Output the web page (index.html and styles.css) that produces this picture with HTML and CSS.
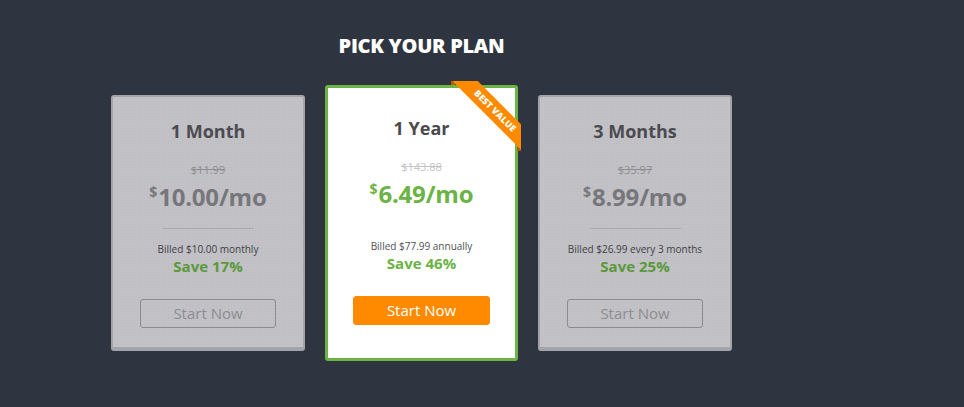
FILE: index.html
```html
<!DOCTYPE html>
<html lang="en">
<head>
<meta charset="utf-8">
<title>Pick your plan</title>
<link rel="stylesheet" href="styles.css">
</head>
<body>
<main class="page">
  <h1 class="title">PICK YOUR PLAN</h1>
  <div class="plans">
    <section class="plan">
      <h2 class="plan-name">1 Month</h2>
      <div class="old-price">$11.99</div>
      <div class="price"><span class="cur">$</span>10.00/mo</div>
      <hr class="divider">
      <div class="billed">Billed $10.00 monthly</div>
      <div class="save">Save 17%</div>
      <button class="btn">Start Now</button>
    </section>
    <section class="plan plan-featured">
      <div class="ribbon"><span class="ribbon-band">BEST VALUE</span></div>
      <h2 class="plan-name">1 Year</h2>
      <div class="old-price">$143.88</div>
      <div class="price"><span class="cur">$</span>6.49/mo</div>
      <hr class="divider">
      <div class="billed">Billed $77.99 annually</div>
      <div class="save">Save 46%</div>
      <button class="btn">Start Now</button>
    </section>
    <section class="plan">
      <h2 class="plan-name">3 Months</h2>
      <div class="old-price">$35.97</div>
      <div class="price"><span class="cur">$</span>8.99/mo</div>
      <hr class="divider">
      <div class="billed">Billed $26.99 every 3 months</div>
      <div class="save">Save 25%</div>
      <button class="btn">Start Now</button>
    </section>
  </div>
</main>
</body>
</html>
```
FILE: styles.css
```css
* { box-sizing: border-box; }
html, body { margin: 0; padding: 0; }
body {
  background: #2e3540;
  font-family: "Open Sans", "Liberation Sans", sans-serif;
  height: 407px;
  overflow: hidden;
}
.page {
  width: 843px;
  display: flex;
  flex-direction: column;
  align-items: center;
}
.title {
  margin: 32px 0 0;
  font-size: 20px;
  line-height: 27px;
  font-weight: 800;
  color: #ffffff;
  letter-spacing: -0.3px;
}
.plans {
  margin-top: 26px;
  display: flex;
  align-items: center;
  gap: 20px;
}
.plan {
  position: relative;
  width: 194px;
  display: flex;
  flex-direction: column;
  align-items: center;
  background-color: #c2c1c6;
  background-image: radial-gradient(rgba(0,0,0,0.03) 0.6px, transparent 0.8px);
  background-size: 3px 3px;
  border: 2px solid #a4a4a8;
  border-bottom-width: 4px;
  border-radius: 3px;
  padding: 22px 0 19px;
  text-align: center;
}
.plan-name {
  margin: 0;
  font-size: 18px;
  line-height: 24px;
  font-weight: 700;
  color: #4b4b50;
}
.old-price {
  margin-top: 19px;
  font-size: 11px;
  line-height: 15px;
  color: #8f8f93;
  text-decoration: line-through;
}
.price {
  margin-top: 3px;
  font-size: 24px;
  line-height: 34px;
  font-weight: 700;
  color: #77777b;
  letter-spacing: -0.2px;
}
.cur {
  font-size: 14px;
  line-height: 0;
  vertical-align: 9px;
  margin-right: 1px;
}
.divider {
  width: 91px;
  height: 1px;
  margin: 14px 0 0;
  border: 0;
  background: #a9acb1;
}
.billed {
  margin-top: 13px;
  font-size: 10px;
  line-height: 14px;
  color: #3e3e43;
}
.save {
  font-size: 15px;
  line-height: 20px;
  font-weight: 700;
  color: #5a9a3b;
}
.btn {
  margin-top: 23px;
  width: 136px;
  height: 29px;
  padding: 0;
  font-family: "Open Sans", "Liberation Sans", sans-serif;
  font-size: 15px;
  line-height: 27px;
  color: #8d8d91;
  background: transparent;
  border: 1px solid #8c8c90;
  border-radius: 3px;
}
.plan-featured {
  width: 193px;
  background: #ffffff;
  border: 3px solid #6cb545;
  border-radius: 3px;
  padding: 28px 0 33px;
}
.plan-featured .plan-name { color: #4a4a4d; }
.plan-featured .old-price { color: #c4c4c6; }
.plan-featured .price { color: #6ab344; }
.plan-featured .divider { background: transparent; }
.plan-featured .billed { color: #505055; }
.plan-featured .save { color: #6ab344; }
.plan-featured .btn {
  width: 137px;
  background: #ff8a00;
  border-color: #ff8a00;
  color: #ffffff;
}
.ribbon {
  position: absolute;
  top: -7px;
  right: -6px;
  width: 70px;
  height: 70px;
  overflow: hidden;
}
.ribbon::before,
.ribbon::after {
  content: "";
  position: absolute;
  width: 4px;
  height: 4px;
  background: #b25e00;
}
.ribbon::before { left: 0; top: 0; }
.ribbon::after { right: 0; bottom: 0; }
.ribbon-band {
  position: absolute;
  z-index: 1;
  left: -6px;
  top: 21px;
  width: 100px;
  height: 18px;
  background: #ff8a00;
  color: #ffffff;
  font-size: 9px;
  line-height: 18px;
  font-weight: 800;
  letter-spacing: 0.1px;
  text-align: center;
  transform: rotate(45deg);
}
```
